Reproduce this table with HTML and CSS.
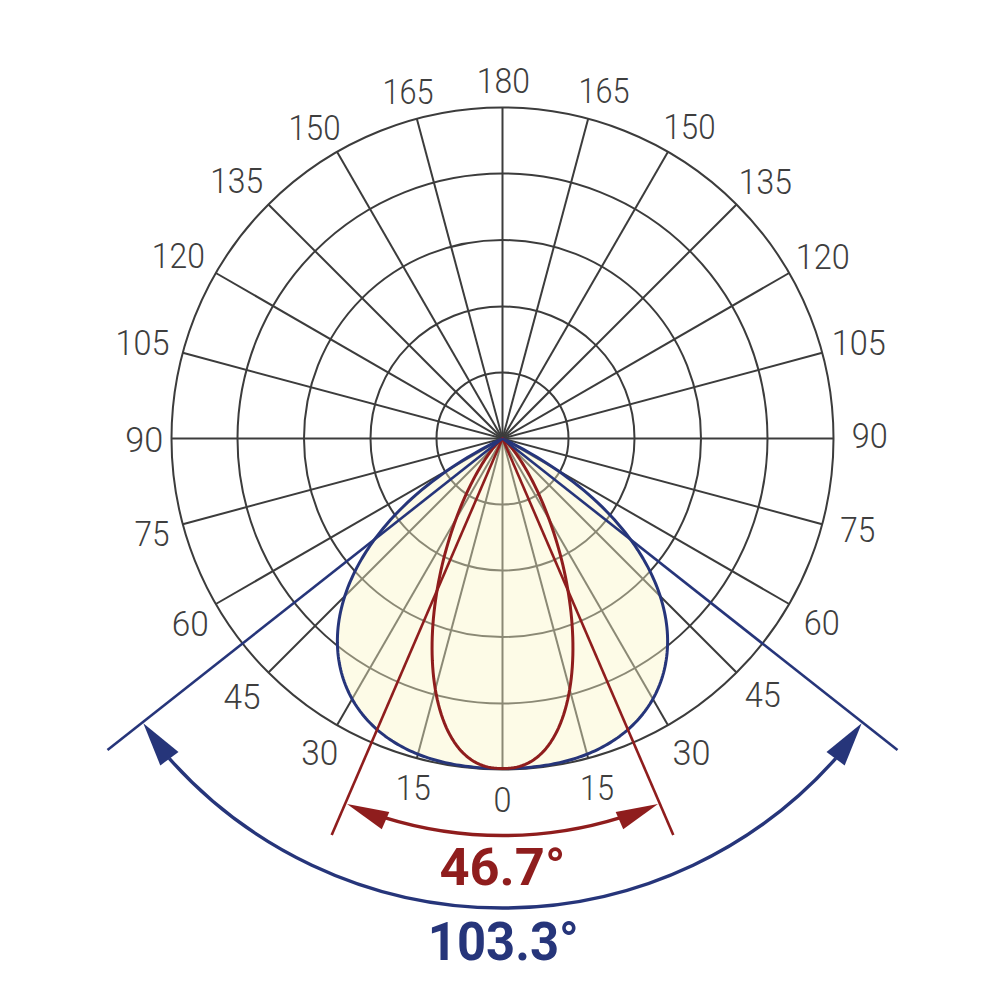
FILE: index.html
```html
<!DOCTYPE html>
<html>
<head>
<meta charset="utf-8">
<title>Polar light distribution</title>
<link rel="stylesheet" href="styles.css">
</head>
<body>
<svg class="chart" width="1000" height="1000" viewBox="0 0 1000 1000" xmlns="http://www.w3.org/2000/svg">
  <g class="grid">
    <circle cx="502.5" cy="438.5" r="66"/>
    <circle cx="502.5" cy="438.5" r="132"/>
    <circle cx="502.5" cy="438.5" r="198.5"/>
    <circle cx="502.5" cy="438.5" r="265"/>
    <circle cx="502.5" cy="438.5" r="331"/>
    <line x1="502.5" y1="107.5" x2="502.5" y2="769.5"/>
    <line x1="502.5" y1="107.5" x2="502.5" y2="769.5" transform="rotate(15 502.5 438.5)"/>
    <line x1="502.5" y1="107.5" x2="502.5" y2="769.5" transform="rotate(30 502.5 438.5)"/>
    <line x1="502.5" y1="107.5" x2="502.5" y2="769.5" transform="rotate(45 502.5 438.5)"/>
    <line x1="502.5" y1="107.5" x2="502.5" y2="769.5" transform="rotate(60 502.5 438.5)"/>
    <line x1="502.5" y1="107.5" x2="502.5" y2="769.5" transform="rotate(75 502.5 438.5)"/>
    <line x1="502.5" y1="107.5" x2="502.5" y2="769.5" transform="rotate(90 502.5 438.5)"/>
    <line x1="502.5" y1="107.5" x2="502.5" y2="769.5" transform="rotate(105 502.5 438.5)"/>
    <line x1="502.5" y1="107.5" x2="502.5" y2="769.5" transform="rotate(120 502.5 438.5)"/>
    <line x1="502.5" y1="107.5" x2="502.5" y2="769.5" transform="rotate(135 502.5 438.5)"/>
    <line x1="502.5" y1="107.5" x2="502.5" y2="769.5" transform="rotate(150 502.5 438.5)"/>
    <line x1="502.5" y1="107.5" x2="502.5" y2="769.5" transform="rotate(165 502.5 438.5)"/>
  </g>

  <path id="lobe-blue" class="lobe-blue" d="M502.5,438.5 Z"/>
  <path id="lobe-red" class="lobe-red" d="M502.5,438.5 Z"/>

  <g class="beam-red">
    <line x1="502.5" y1="438.5" x2="331.7" y2="835"/>
    <line x1="502.5" y1="438.5" x2="673.3" y2="835"/>
    <path d="M384.5,817.6 A397,397 0 0 0 620.5,817.6"/>
  </g>
  <g class="beam-blue">
    <line x1="502.5" y1="438.5" x2="107.5" y2="750"/>
    <line x1="502.5" y1="438.5" x2="897.5" y2="750"/>
    <path d="M169.2,758.4 A446,446 0 0 0 835.8,758.4"/>
  </g>

  <polygon class="head-red" points="0,0 42,-9.5 42,9.5" transform="translate(347 804) rotate(23.35)"/>
  <polygon class="head-red" points="0,0 -42,-9.5 -42,9.5" transform="translate(658 804) rotate(-23.35)"/>
  <polygon class="head-blue" points="0,0 44,-11.3 44,11.3" transform="translate(143.3 723.3) rotate(53.6)"/>
  <polygon class="head-blue" points="0,0 -44,-11.3 -44,11.3" transform="translate(861.7 723.3) rotate(-53.6)"/>

  <g class="lbl">
    <text x="503.3" y="93.3" textLength="53" lengthAdjust="spacingAndGlyphs">180</text>
    <text x="408" y="103.5" textLength="51" lengthAdjust="spacingAndGlyphs">165</text>
    <text x="314.5" y="140" textLength="52" lengthAdjust="spacingAndGlyphs">150</text>
    <text x="236.7" y="193.3" textLength="53" lengthAdjust="spacingAndGlyphs">135</text>
    <text x="178.3" y="268.3" textLength="53" lengthAdjust="spacingAndGlyphs">120</text>
    <text x="142.5" y="355" textLength="54" lengthAdjust="spacingAndGlyphs">105</text>
    <text x="144.2" y="451.7" textLength="38" lengthAdjust="spacingAndGlyphs">90</text>
    <text x="152" y="546" textLength="35" lengthAdjust="spacingAndGlyphs">75</text>
    <text x="190.3" y="636" textLength="37" lengthAdjust="spacingAndGlyphs">60</text>
    <text x="242" y="709.3" textLength="37" lengthAdjust="spacingAndGlyphs">45</text>
    <text x="319.7" y="765" textLength="37" lengthAdjust="spacingAndGlyphs">30</text>
    <text x="413.3" y="800" textLength="35" lengthAdjust="spacingAndGlyphs">15</text>
    <text x="502.5" y="811.7" textLength="18" lengthAdjust="spacingAndGlyphs">0</text>
    <text x="597" y="800" textLength="34" lengthAdjust="spacingAndGlyphs">15</text>
    <text x="691.5" y="765" textLength="38" lengthAdjust="spacingAndGlyphs">30</text>
    <text x="762.7" y="706.5" textLength="36" lengthAdjust="spacingAndGlyphs">45</text>
    <text x="821.7" y="634.8" textLength="36" lengthAdjust="spacingAndGlyphs">60</text>
    <text x="857.8" y="541.7" textLength="35" lengthAdjust="spacingAndGlyphs">75</text>
    <text x="869.7" y="448.3" textLength="36" lengthAdjust="spacingAndGlyphs">90</text>
    <text x="858.7" y="355" textLength="54" lengthAdjust="spacingAndGlyphs">105</text>
    <text x="822.8" y="268.7" textLength="54" lengthAdjust="spacingAndGlyphs">120</text>
    <text x="765.3" y="193.5" textLength="53" lengthAdjust="spacingAndGlyphs">135</text>
    <text x="689.5" y="139" textLength="52" lengthAdjust="spacingAndGlyphs">150</text>
    <text x="604" y="103.3" textLength="51" lengthAdjust="spacingAndGlyphs">165</text>
  </g>

  <text class="angle angle-red" x="502.4" y="885" textLength="126" lengthAdjust="spacingAndGlyphs">46.7°</text>
  <text class="angle angle-blue" x="503.3" y="960" textLength="151" lengthAdjust="spacingAndGlyphs">103.3°</text>
</svg>
<script src="script.js"></script>
</body>
</html>
```

FILE: styles.css
```css
html, body {
  margin: 0;
  padding: 0;
  background: #ffffff;
}

.chart {
  display: block;
  width: 1000px;
  height: 1000px;
}

.grid circle,
.grid line {
  fill: none;
  stroke: #3c3c3c;
  stroke-width: 2;
}

.lobe-blue {
  fill: #faf5c5;
  fill-opacity: 0.42;
  stroke: #26357a;
  stroke-width: 3;
  stroke-linejoin: round;
}

.lobe-red {
  fill: none;
  stroke: #8f1d1d;
  stroke-width: 3;
  stroke-linejoin: round;
}

.beam-red line,
.beam-red path {
  fill: none;
  stroke: #8f1d1d;
  stroke-width: 2.6;
}

.beam-red path {
  stroke-width: 3.4;
}

.beam-blue line,
.beam-blue path {
  fill: none;
  stroke: #26357a;
  stroke-width: 2.6;
}

.beam-blue path {
  stroke-width: 3.4;
}

.head-red {
  fill: #8f1d1d;
}

.head-blue {
  fill: #26357a;
}

.lbl text {
  font-family: Roboto, "Liberation Sans", sans-serif;
  font-weight: 300;
  font-size: 35px;
  fill: #3e3e3e;
  text-anchor: middle;
}

.angle {
  font-family: Roboto, "Liberation Sans", sans-serif;
  font-weight: 700;
  text-anchor: middle;
}

.angle-red {
  font-size: 52px;
  fill: #8f1d1d;
}

.angle-blue {
  font-size: 54px;
  fill: #26357a;
}
```

FILE: script.js
```js
(function () {
  var cx = 502.5, cy = 438.5, R = 330;

  function lobe(f, max) {
    var parts = [];
    for (var t = -max; t <= max + 1e-9; t += 0.5) {
      var r = f(Math.abs(t));
      var rad = t * Math.PI / 180;
      parts.push((cx - r * Math.sin(rad)).toFixed(2) + ',' + (cy + r * Math.cos(rad)).toFixed(2));
    }
    return 'M' + cx + ',' + cy + ' L' + parts.join(' L') + ' Z';
  }

  function blue(t) {
    return t >= 64 ? 0 : R * (1 - Math.pow(t / 64, 3.2));
  }

  function red(t) {
    return R * Math.exp(-3.606e-4 * Math.pow(t, 2.4));
  }

  document.getElementById('lobe-blue').setAttribute('d', lobe(blue, 64));
  document.getElementById('lobe-red').setAttribute('d', lobe(red, 90));
})();
```
